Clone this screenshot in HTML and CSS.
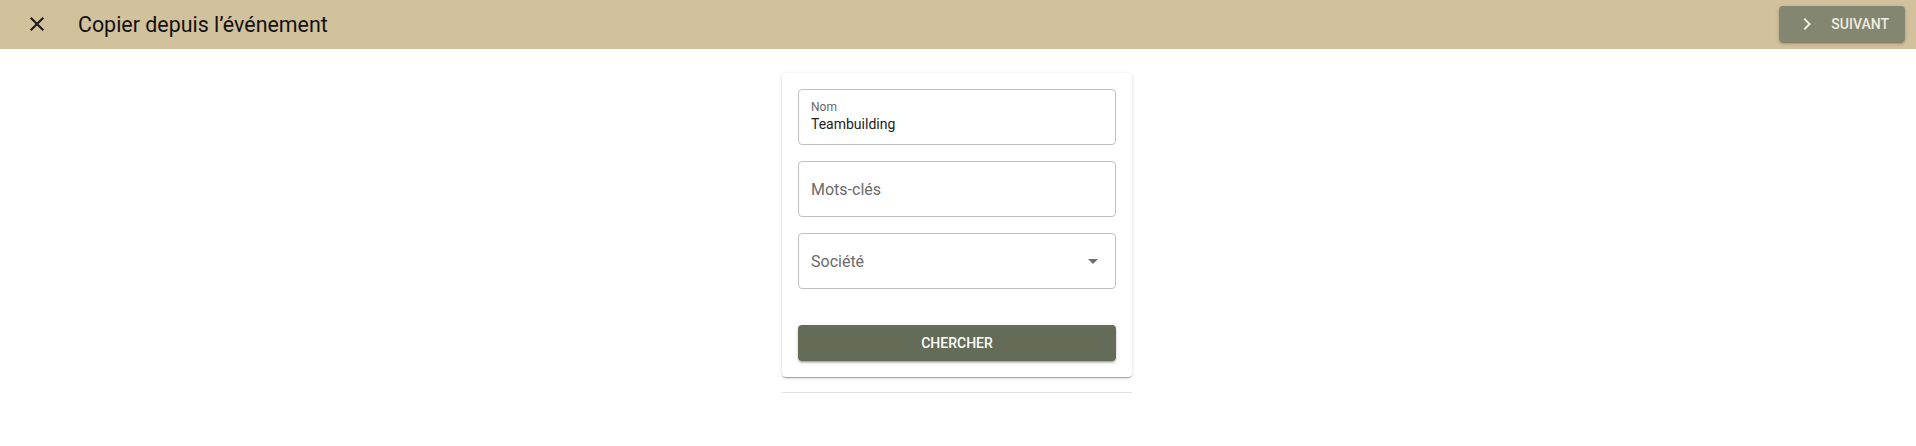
FILE: index.html
```html
<!DOCTYPE html>
<html lang="fr">
<head>
<meta charset="utf-8">
<title>Copier depuis l’événement</title>
<link rel="stylesheet" href="styles.css">
</head>
<body>
<header class="toolbar">
  <span class="close-btn" aria-label="Fermer">
    <svg class="icon" viewBox="0 0 24 24" width="24" height="24"><path d="M19 6.41 17.59 5 12 10.59 6.41 5 5 6.41 10.59 12 5 17.59 6.41 19 12 13.41 17.59 19 19 17.59 13.41 12z" fill="#1a1a1a"/></svg>
  </span>
  <h1 class="title">Copier depuis l’événement</h1>
  <span class="spacer"></span>
  <button class="next-btn" type="button">
    <svg class="icon" viewBox="0 0 24 24" width="24" height="24"><path d="M10 6 8.59 7.41 13.17 12l-4.58 4.59L10 18l6-6z" fill="#efeadb"/></svg>
    <span>Suivant</span>
  </button>
</header>
<main class="content">
  <section class="card">
    <div class="field field-filled">
      <span class="field-label">Nom</span>
      <span class="field-value">Teambuilding</span>
    </div>
    <div class="field">
      <span class="placeholder">Mots-clés</span>
    </div>
    <div class="field field-select">
      <span class="placeholder">Société</span>
      <span class="select-arrow"></span>
    </div>
    <button class="search-btn" type="button">Chercher</button>
  </section>
  <div class="divider"></div>
</main>
</body>
</html>
```
FILE: styles.css
```css
html, body {
  margin: 0;
  padding: 0;
  background: #ffffff;
  font-family: Roboto, "Liberation Sans", Arial, sans-serif;
  color: #1c1c1c;
}

.toolbar {
  display: flex;
  align-items: center;
  height: 49px;
  background: #d1c19c;
  padding: 0 11px 1px 25px;
  box-sizing: border-box;
}

.close-btn {
  display: flex;
  width: 24px;
  height: 24px;
}

.icon {
  display: block;
}

.title {
  margin: 0 0 0 29px;
  font-size: 21.4px;
  font-weight: 400;
  color: #111111;
  letter-spacing: 0;
}

.spacer {
  flex: 1;
}

.next-btn {
  display: flex;
  align-items: center;
  gap: 12px;
  height: 36px;
  padding: 0 16px;
  border: none;
  border-radius: 4px;
  background: #838670;
  color: #f0ece0;
  font-family: inherit;
  font-size: 14px;
  font-weight: 500;
  text-transform: uppercase;
  letter-spacing: 0;
  box-shadow: 0 3px 1px -2px rgba(0,0,0,.2), 0 2px 2px 0 rgba(0,0,0,.14), 0 1px 5px 0 rgba(0,0,0,.12);
}

.content {
  display: flex;
  flex-direction: column;
  align-items: center;
  padding-top: 24px;
  padding-right: 2px;
}

.card {
  width: 350px;
  box-sizing: border-box;
  padding: 16px;
  border-radius: 4px;
  background: #fff;
  display: flex;
  flex-direction: column;
  gap: 16px;
  box-shadow: 0 2px 1px -1px rgba(0,0,0,.2), 0 1px 1px 0 rgba(0,0,0,.14), 0 1px 4px 0 rgba(0,0,0,.14);
}

.field {
  height: 56px;
  box-sizing: border-box;
  border: 1px solid #c0c0c0;
  border-radius: 4px;
  padding: 0 12px;
  display: flex;
  align-items: center;
}

.field-filled {
  flex-direction: column;
  align-items: flex-start;
  justify-content: center;
}

.field-label {
  font-size: 12px;
  line-height: 14px;
  margin-top: -1px;
  color: #666666;
}

.field-value {
  font-size: 14px;
  line-height: 19px;
  margin-top: 1px;
  color: #1c1c1c;
}

.placeholder {
  font-size: 16px;
  color: #6b6b6b;
  flex: 1;
}

.select-arrow {
  width: 0;
  height: 0;
  border-left: 5px solid transparent;
  border-right: 5px solid transparent;
  border-top: 5px solid #6e6e6e;
  margin-right: 5px;
}

.search-btn {
  margin-top: 20px;
  height: 36px;
  border: none;
  border-radius: 4px;
  background: #646b56;
  color: #ffffff;
  font-family: inherit;
  font-size: 14px;
  font-weight: 500;
  text-transform: uppercase;
  box-shadow: 0 3px 1px -2px rgba(0,0,0,.2), 0 2px 2px 0 rgba(0,0,0,.14), 0 1px 5px 0 rgba(0,0,0,.12);
}

.divider {
  width: 350px;
  height: 1px;
  background: #e2e2e2;
  margin-top: 15px;
}
```
